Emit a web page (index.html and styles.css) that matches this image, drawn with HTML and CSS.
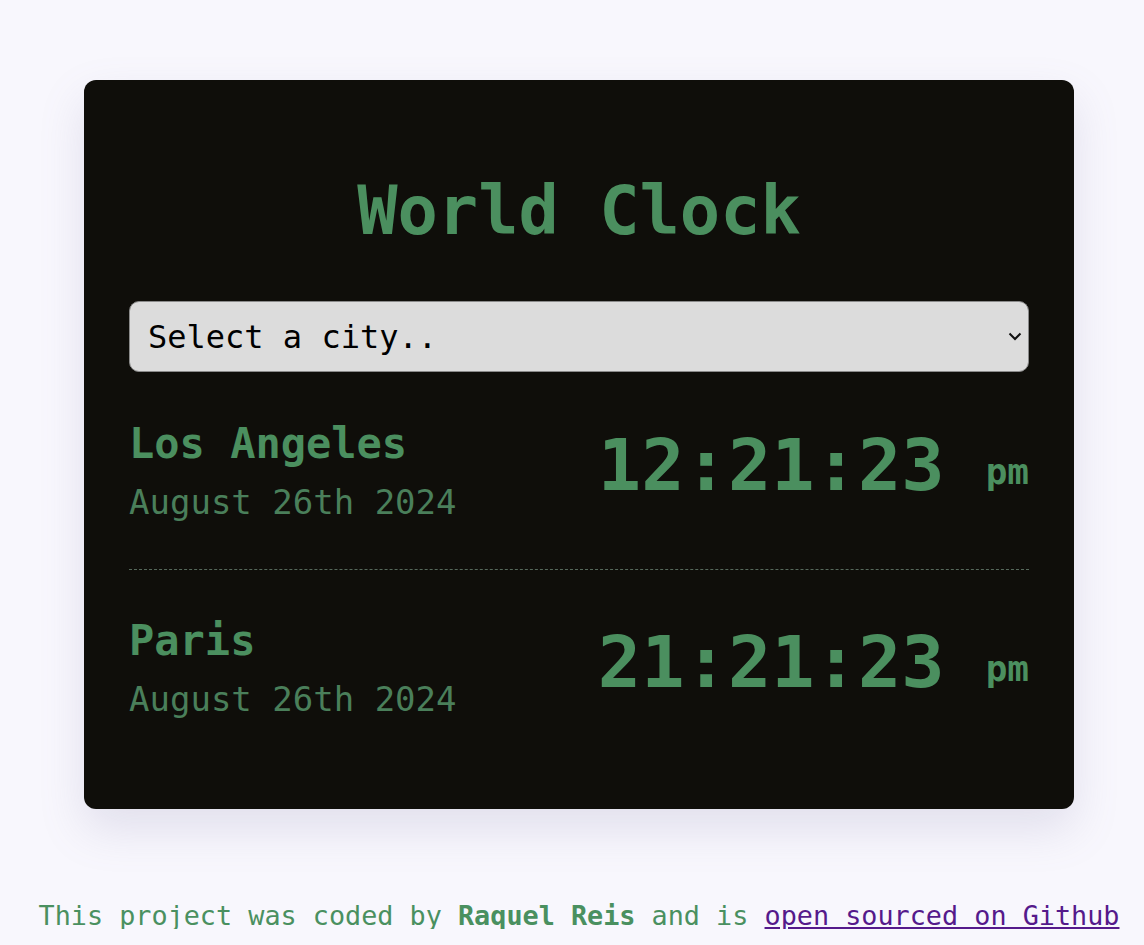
FILE: index.html
```html
<!DOCTYPE html>
<html lang="en">
<head>
<meta charset="utf-8">
<title>World Clock</title>
<link rel="stylesheet" href="styles.css">
</head>
<body>
<div class="page">
  <main class="card">
    <h1 class="title">World Clock</h1>
    <div class="select-wrap">
      <select class="city-select">
        <option>Select a city..</option>
        <option>Los Angeles</option>
        <option>Paris</option>
      </select>
      <svg class="chevron" width="14" height="9" viewBox="0 0 14 9" aria-hidden="true"><path d="M1.5 1.5 L7 7 L12.5 1.5" fill="none" stroke="#111" stroke-width="2"/></svg>
    </div>
    <div class="cities">
      <div class="city">
        <div class="city-info">
          <h2 class="city-name">Los Angeles</h2>
          <div class="city-date">August 26th 2024</div>
        </div>
        <div class="city-time">12:21:23<span class="ampm">pm</span></div>
      </div>
      <div class="city">
        <div class="city-info">
          <h2 class="city-name">Paris</h2>
          <div class="city-date">August 26th 2024</div>
        </div>
        <div class="city-time">21:21:23<span class="ampm">pm</span></div>
      </div>
    </div>
  </main>
  <footer class="footer">This project was coded by <strong>Raquel Reis</strong> and is <a href="#" class="link">open sourced on Github</a></footer>
</div>
</body>
</html>
```
FILE: styles.css
```css
* { box-sizing: border-box; }
html, body {
  margin: 0;
  padding: 0;
  background: #f8f7fd;
}
body {
  font-family: "DejaVu Sans Mono", "Liberation Mono", monospace;
}
.page {
  width: 1084px;
  margin-left: 37px;
  padding-top: 80px;
}
.card {
  margin: 0 47px;
  background: #0f0e0a;
  border-radius: 12px;
  padding: 97px 45px 43px;
  box-shadow: 0 20px 45px rgba(120, 115, 160, 0.18);
}
.title {
  margin: 0;
  text-align: center;
  color: #4b8f5f;
  font-size: 67px;
  line-height: 68px;
  font-weight: bold;
}
.select-wrap {
  position: relative;
  margin-top: 56px;
  margin-bottom: 1px;
}
.city-select {
  display: block;
  width: 100%;
  height: 71px;
  padding: 0 40px 0 18px;
  font-family: "DejaVu Sans Mono", "Liberation Mono", monospace;
  font-size: 32px;
  color: #000;
  background-color: #dcdcdc;
  border: 1px solid #8a8a8a;
  border-radius: 10px;
  appearance: none;
  -webkit-appearance: none;
}
.chevron {
  position: absolute;
  right: 7px;
  top: 31px;
  pointer-events: none;
}
.city {
  display: flex;
  justify-content: space-between;
  align-items: flex-start;
  padding: 50px 0;
  border-bottom: 1px dashed #56695b;
}
.city:last-child {
  border-bottom: none;
}
.city-name {
  margin: 0;
  color: #4b8f5f;
  font-size: 42px;
  line-height: 42px;
  font-weight: bold;
}
.city-date {
  margin-top: 20px;
  color: #4a7f5a;
  font-size: 34px;
  line-height: 34px;
}
.city-time {
  margin-top: 6px;
  color: #4b8f5f;
  font-size: 72px;
  line-height: 72px;
  font-weight: bold;
  white-space: nowrap;
}
.ampm {
  margin-left: 41px;
  font-size: 36px;
  vertical-align: 6px;
}
.footer {
  margin-top: 93px;
  text-align: center;
  white-space: nowrap;
  color: #4a9060;
  font-size: 26.8px;
  line-height: 27px;
}
.footer strong {
  font-weight: bold;
}
.link {
  color: #551a8b;
}
```
